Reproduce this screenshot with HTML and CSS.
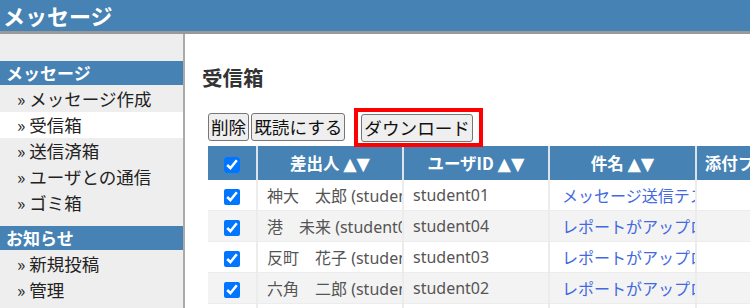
FILE: index.html
```html
<!DOCTYPE html>
<html lang="ja">
<head>
<meta charset="utf-8">
<title>メッセージ</title>
<link rel="stylesheet" href="styles.css">
</head>
<body>
<header class="topbar">メッセージ</header>
<div class="layout">
  <nav class="sidebar">
    <div class="side-title">メッセージ</div>
    <ul class="side-list">
      <li class="side-item">» メッセージ作成</li>
      <li class="side-item active">» 受信箱</li>
      <li class="side-item">» 送信済箱</li>
      <li class="side-item">» ユーザとの通信</li>
      <li class="side-item">» ゴミ箱</li>
    </ul>
    <div class="side-title">お知らせ</div>
    <ul class="side-list">
      <li class="side-item">» 新規投稿</li>
      <li class="side-item">» 管理</li>
    </ul>
  </nav>
  <main class="main">
    <h2 class="page-title">受信箱</h2>
    <div class="toolbar">
      <button class="btn" type="button">削除</button>
      <button class="btn" type="button">既読にする</button>
      <span class="highlight"><button class="btn" type="button">ダウンロード</button></span>
    </div>
    <table class="inbox">
      <colgroup>
        <col class="c-check"><col class="c-from"><col class="c-id"><col class="c-subj"><col class="c-att">
      </colgroup>
      <thead>
        <tr>
          <th><input type="checkbox" class="chk" checked></th>
          <th>差出人 <span class="arrows">▲▼</span></th>
          <th>ユーザID <span class="arrows">▲▼</span></th>
          <th>件名 <span class="arrows">▲▼</span></th>
          <th>添付ファイル <span class="arrows">▲▼</span></th>
        </tr>
      </thead>
      <tbody>
        <tr>
          <td class="cc"><input type="checkbox" class="chk" checked></td>
          <td>神大　太郎 (student01)</td>
          <td>student01</td>
          <td><a class="subj" href="#">メッセージ送信テスト</a></td>
          <td></td>
        </tr>
        <tr class="alt">
          <td class="cc"><input type="checkbox" class="chk" checked></td>
          <td>港　未来 (student04)</td>
          <td>student04</td>
          <td><a class="subj" href="#">レポートがアップロードされました</a></td>
          <td></td>
        </tr>
        <tr>
          <td class="cc"><input type="checkbox" class="chk" checked></td>
          <td>反町　花子 (student03)</td>
          <td>student03</td>
          <td><a class="subj" href="#">レポートがアップロードされました</a></td>
          <td></td>
        </tr>
        <tr class="alt">
          <td class="cc"><input type="checkbox" class="chk" checked></td>
          <td>六角　二郎 (student02)</td>
          <td>student02</td>
          <td><a class="subj" href="#">レポートがアップロードされました</a></td>
          <td></td>
        </tr>
        <tr>
          <td class="cc"><input type="checkbox" class="chk"></td>
          <td>神大　太郎 (student01)</td>
          <td>student01</td>
          <td><a class="subj" href="#">テスト</a></td>
          <td></td>
        </tr>
      </tbody>
    </table>
  </main>
</div>
</body>
</html>
```
FILE: styles.css
```css
* { box-sizing: border-box; }
html, body {
  margin: 0;
  padding: 0;
  height: 100%;
  overflow: hidden;
}
body {
  font-family: "Noto Sans", "Noto Sans CJK JP", sans-serif;
  color: #222;
  background: #fff;
}
.topbar {
  height: 34px;
  background: #4682b4;
  border-bottom: 3px solid #999;
  color: #fff;
  font-weight: bold;
  font-size: 22px;
  line-height: 31px;
  padding-left: 3px;
  font-family: "Noto Sans CJK JP", sans-serif;
}
.layout {
  display: flex;
  height: calc(100% - 34px);
}
.sidebar {
  flex: 0 0 185px;
  background: #eee;
  border-right: 2px solid #aaa;
  padding-top: 27px;
}
.side-title {
  background: #4682b4;
  color: #fff;
  font-weight: bold;
  font-size: 17px;
  height: 24px;
  line-height: 24px;
  padding-left: 6px;
  font-family: "Noto Sans CJK JP", sans-serif;
}
.side-list {
  list-style: none;
  margin: 1px 0 10px;
  padding: 0;
}
.side-item {
  height: 26px;
  line-height: 26px;
  font-size: 17.5px;
  padding-left: 17px;
  color: #222;
  font-family: "Noto Sans CJK JP", sans-serif;
}
.side-item.active {
  background: #fff;
}
.main {
  flex: 1;
  min-width: 0;
  overflow: hidden;
  padding-left: 17px;
}
.page-title {
  margin: 28px 0 0;
  font-size: 20.5px;
  line-height: 30px;
  font-weight: bold;
  color: #333;
  font-family: "Noto Sans CJK JP", sans-serif;
}
.toolbar {
  display: flex;
  align-items: flex-start;
  gap: 2px;
  margin: 21px 0 0 6px;
}
.btn {
  font-family: "Noto Sans CJK JP", sans-serif;
  font-size: 17.6px;
  line-height: 24px;
  padding: 1px 2px;
  border: 1px solid #767676;
  border-radius: 3px;
  background: #efefef;
  color: #111;
  display: block;
}
.highlight {
  display: block;
  border: 4px solid #f00;
  padding: 2px 6px 1px 3px;
  margin: -5px 0 -6px 7px;
}
.inbox {
  margin: 5px 0 0 6px;
  table-layout: fixed;
  border-collapse: separate;
  border-spacing: 0;
  width: 636px;
}
.c-check { width: 50px; }
.c-from { width: 146px; }
.c-id { width: 146px; }
.c-subj { width: 147px; }
.c-att { width: 147px; }
.inbox th {
  background: #4682b4;
  color: #fff;
  font-weight: bold;
  font-size: 16.5px;
  line-height: 20px;
  height: 34px;
  padding: 0 4px;
  border-right: 2px solid #dde3ea;
  white-space: nowrap;
  overflow: hidden;
  text-align: center;
  font-family: "Noto Sans CJK JP", sans-serif;
}
.arrows {
  font-family: "DejaVu Sans", sans-serif;
  font-size: 17.5px;
  line-height: 1;
}
.inbox td {
  height: 31px;
  padding: 0 0 0 9px;
  font-size: 16px;
  color: #555;
  white-space: nowrap;
  overflow: hidden;
  border-right: 2px solid #ececec;
  border-bottom: 1px solid #ececec;
  background: #fff;
}
.inbox tr.alt td {
  background: #f3f3f3;
}
.inbox td.cc {
  text-align: center;
  padding: 0;
}
.inbox th:first-child {
  padding: 0;
}
.chk {
  width: 16px;
  height: 16px;
  margin: 0;
  vertical-align: middle;
}
.subj {
  color: #4169e1;
  text-decoration: none;
  padding-left: 3px;
}
```
